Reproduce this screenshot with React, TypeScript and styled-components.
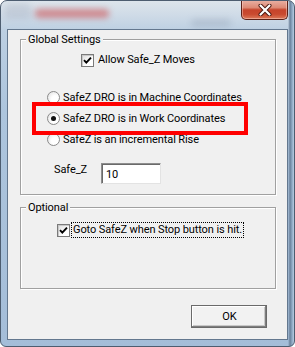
import React from "react";
import styled, { createGlobalStyle } from "styled-components";

const Global = createGlobalStyle`
  html, body { margin: 0; padding: 0; background: #ffffff; }
  body {
    width: 295px;
    height: 347px;
    overflow: hidden;
    font-family: Roboto, "Liberation Sans", sans-serif;
    font-size: 11px;
    letter-spacing: -0.1px;
    color: #000;
  }
  * { box-sizing: border-box; }
`;

const Window = styled.div`
  position: relative;
  width: 295px;
  height: 347px;
  border: 1px solid #4d5d70;
  border-radius: 7px 7px 6px 6px;
  overflow: hidden;
  display: flex;
  flex-direction: column;
  background:
    linear-gradient(90deg, transparent 0 287px, #6a809a 289px, #8ea7c2 291px, #b9cde2 293px),
    linear-gradient(180deg, #dde5ec 0px, #cfdbe7 14px, #bccfe2 30px, #adc5dd 110px, #a4bdd8 347px);
`;

const TitleBar = styled.div`
  position: relative;
  height: 28px;
  flex: none;
`;

const Blob = styled.div<{ $x: number; $y: number; $w: number; $h: number; $c: string }>`
  position: absolute;
  left: ${(p) => p.$x}px;
  top: ${(p) => p.$y}px;
  width: ${(p) => p.$w}px;
  height: ${(p) => p.$h}px;
  background: ${(p) => p.$c};
  border-radius: 4px;
  filter: blur(3px);
`;

const CloseButton = styled.div`
  position: absolute;
  top: -1px;
  right: 6px;
  width: 47px;
  height: 20px;
  border: 1px solid #5b2118;
  border-top: none;
  border-radius: 0 0 5px 5px;
  background: linear-gradient(
    180deg,
    #eab3a6 0%,
    #dd8a75 40%,
    #c6442b 52%,
    #c94a2f 75%,
    #dc7a5a 100%
  );
  box-shadow: inset 0 0 0 1px rgba(255, 220, 210, 0.45);
  display: flex;
  align-items: center;
  justify-content: center;
`;

const Client = styled.div`
  flex: 1;
  margin: 0 6px 6px 6px;
  border: 1px solid #63778e;
  background: #f0f0f0;
  padding: 9px 11px 0 12px;
  display: flex;
  flex-direction: column;
  position: relative;
`;

const Group = styled.div<{ $h: number; $top?: number }>`
  position: relative;
  height: ${(p) => p.$h}px;
  margin-top: ${(p) => p.$top ?? 0}px;
  border: 1px solid #a0a0a0;
  box-shadow: inset 1px 1px 0 #ffffff, 1px 1px 0 #ffffff;
  display: flex;
  flex-direction: column;
  padding-top: 10px;
`;

const Legend = styled.span`
  position: absolute;
  top: -8px;
  left: 5px;
  padding: 0 2px;
  background: #f0f0f0;
  line-height: 15px;
`;

const Row = styled.div<{ $indent: number; $top?: number; $h?: number }>`
  display: flex;
  align-items: center;
  height: ${(p) => p.$h ?? 20}px;
  margin-top: ${(p) => p.$top ?? 0}px;
  padding-left: ${(p) => p.$indent - 1}px;
  white-space: nowrap;
`;

const FieldRow = styled(Row)`
  align-items: flex-start;
`;

const CheckBox = styled.span`
  width: 13px;
  height: 13px;
  flex: none;
  border: 1px solid #7a7a7a;
  background: linear-gradient(135deg, #dcdcdc, #ffffff 70%);
  box-shadow: inset 1px 1px 0 #c8c8c8;
  display: flex;
  align-items: center;
  justify-content: center;
`;

const Radio = styled.span<{ $on?: boolean }>`
  width: 13px;
  height: 13px;
  flex: none;
  border-radius: 50%;
  border: 1px solid #8a8a8a;
  background: radial-gradient(circle at 65% 65%, #ffffff 0 35%, #dcdcdc 100%);
  display: flex;
  align-items: center;
  justify-content: center;
  &::after {
    content: "";
    display: ${(p) => (p.$on ? "block" : "none")};
    width: 5px;
    height: 5px;
    border-radius: 50%;
    background: #111;
  }
`;

const Label = styled.span<{ $gap: number; $focus?: boolean }>`
  margin-left: ${(p) => p.$gap}px;
  line-height: 14px;
  padding: 0 1px;
  outline: ${(p) => (p.$focus ? "1px dotted #000" : "none")};
  outline-offset: 0;
`;

const FieldLabel = styled.span`
  line-height: 14px;
  width: 47px;
`;

const TextInput = styled.div`
  width: 60px;
  height: 21px;
  background: #ffffff;
  border-top: 1px solid #8e8e8e;
  border-left: 1px solid #8e8e8e;
  border-right: 1px solid #e3e3e3;
  border-bottom: 1px solid #e3e3e3;
  box-shadow: inset 1px 1px 0 #6a6a6a;
  padding: 4px 0 0 4px;
  line-height: 13px;
`;

const Highlight = styled.div`
  position: absolute;
  left: 24px;
  top: 72px;
  width: 216px;
  height: 33px;
  border: 4px solid #ff0000;
  pointer-events: none;
`;

const Footer = styled.div`
  display: flex;
  justify-content: flex-end;
  padding-right: 9px;
  margin-top: 16px;
`;

const Button = styled.div`
  width: 76px;
  height: 23px;
  border: 1px solid #6a6a6a;
  background: #f2f2f2;
  box-shadow: inset -1px -1px 0 #7e7e7e, inset 1px 1px 0 #ffffff, inset -2px -2px 0 #c8c8c8;
  display: flex;
  align-items: center;
  justify-content: center;
  padding-left: 1px;
`;

const Check = () => (
  <svg width="9" height="9" viewBox="0 0 9 9">
    <path d="M1 4.2 L3.3 6.6 L8 1.6" fill="none" stroke="#000" strokeWidth="1.9" />
  </svg>
);

const CloseX = () => (
  <svg width="14" height="12" viewBox="0 0 14 12">
    <path d="M2.5 1.5 L11.5 10.5 M11.5 1.5 L2.5 10.5" stroke="#4a1810" strokeWidth="4" strokeLinecap="round" />
    <path d="M2.5 1.5 L11.5 10.5 M11.5 1.5 L2.5 10.5" stroke="#ffffff" strokeWidth="2.2" strokeLinecap="round" />
  </svg>
);

export default function App() {
  return (
    <>
      <Global />
      <Window>
        <TitleBar>
          <Blob $x={34} $y={8} $w={74} $h={9} $c="rgba(205, 70, 70, 0.55)" />
          <Blob $x={4} $y={2} $w={26} $h={16} $c="rgba(120, 130, 150, 0.18)" />
          <Blob $x={190} $y={18} $w={40} $h={8} $c="rgba(110, 125, 145, 0.22)" />
          <CloseButton>
            <CloseX />
          </CloseButton>
        </TitleBar>
        <Client>
          <Group $h={156}>
            <Legend>Global Settings</Legend>
            <Row $indent={61}>
              <CheckBox>
                <Check />
              </CheckBox>
              <Label $gap={3}>Allow Safe_Z Moves</Label>
            </Row>
            <Row $indent={27} $top={17} $h={21}>
              <Radio />
              <Label $gap={2}>SafeZ DRO is in Machine Coordinates</Label>
            </Row>
            <Row $indent={27} $h={21}>
              <Radio $on />
              <Label $gap={2}>SafeZ DRO is in Work Coordinates</Label>
            </Row>
            <Row $indent={27} $h={21}>
              <Radio />
              <Label $gap={2}>SafeZ is an incremental Rise</Label>
            </Row>
            <FieldRow $indent={34} $top={13} $h={21}>
              <FieldLabel>Safe_Z</FieldLabel>
              <TextInput>10</TextInput>
            </FieldRow>
          </Group>
          <Group $h={82} $top={12}>
            <Legend>Optional</Legend>
            <Row $indent={37} $top={2}>
              <CheckBox>
                <Check />
              </CheckBox>
              <Label $gap={2} $focus>
                Goto SafeZ when Stop button is hit.
              </Label>
            </Row>
          </Group>
          <Footer>
            <Button>OK</Button>
          </Footer>
          <Highlight />
        </Client>
      </Window>
    </>
  );
}
